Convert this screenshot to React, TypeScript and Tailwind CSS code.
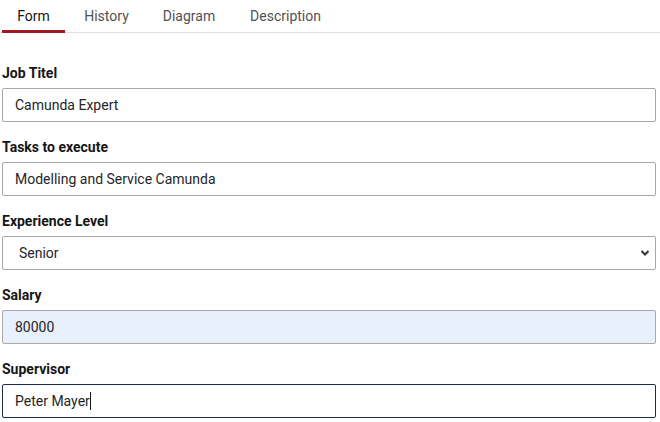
import React, { useState } from "react";

const tabs = [
  { name: "Form", w: "w-[63px]" },
  { name: "History", w: "w-[83px]" },
  { name: "Diagram", w: "w-[82px]" },
  { name: "Description", w: "w-[111px]" },
];

const labelStyle = "block text-[14px] font-bold text-[#161616] leading-[20px] mb-[5px]";
const inputBase =
  "w-full h-[34px] px-[12px] rounded-[2px] border text-[14px] text-[#262626] outline-none";

const App: React.FC = () => {
  const [active] = useState("Form");

  return (
    <div className="w-[660px] h-[422px] bg-white overflow-hidden font-['Roboto',sans-serif]">
      {/* Tabs */}
      <div className="flex h-[33px] border-b border-[#e0e0e0] pl-[2px]">
        {tabs.map(t => (
          <div
            key={t.name}
            className={`${t.w} h-[33px] flex items-center justify-center text-[14px] ${
              t.name === active ? "text-[#161616] border-b-[3px] border-[#a2191f] pt-[2px]" : "text-[#525252] pb-[1px]"
            }`}
          >
            {t.name}
          </div>
        ))}
      </div>

      {/* Felder */}
      <form className="pl-[2px] pr-[4px] pt-[30px] flex flex-col gap-[15px]">
        <div>
          <label className={labelStyle}>Job Titel</label>
          <input className={`${inputBase} border-[#a8a8a8] bg-white`} defaultValue="Camunda Expert" />
        </div>
        <div>
          <label className={labelStyle}>Tasks to execute</label>
          <input className={`${inputBase} border-[#a8a8a8] bg-white`} defaultValue="Modelling and Service Camunda" />
        </div>
        <div>
          <label className={labelStyle}>Experience Level</label>
          <div className="relative">
            <select className={`${inputBase} border-[#a8a8a8] bg-white appearance-none px-[16px]`} defaultValue="Senior">
              <option>Junior</option>
              <option>Senior</option>
            </select>
            <svg
              className="absolute right-[5px] top-[12px] pointer-events-none"
              width="12"
              height="10"
              viewBox="0 0 12 10"
            >
              <path d="M2.5 3 L6 6.5 L9.5 3" fill="none" stroke="#333" strokeWidth="2" />
            </svg>
          </div>
        </div>
        <div>
          <label className={labelStyle}>Salary</label>
          <input className={`${inputBase} border-[#a8a8a8] bg-[#e8f0fe]`} defaultValue="80000" />
        </div>
        <div>
          <label className={labelStyle}>Supervisor</label>
          <div className="relative">
            <input className={`${inputBase} border-[#1d2b4f] bg-white`} defaultValue="Peter Mayer" />
            {/* Cursor */}
            <div className="absolute inset-0 flex items-center pl-[13px] pointer-events-none text-[14px]">
              <span className="invisible">Peter Mayer</span>
              <span className="w-px h-[18px] bg-[#161616]" />
            </div>
          </div>
        </div>
      </form>
    </div>
  );
};

export default App;
